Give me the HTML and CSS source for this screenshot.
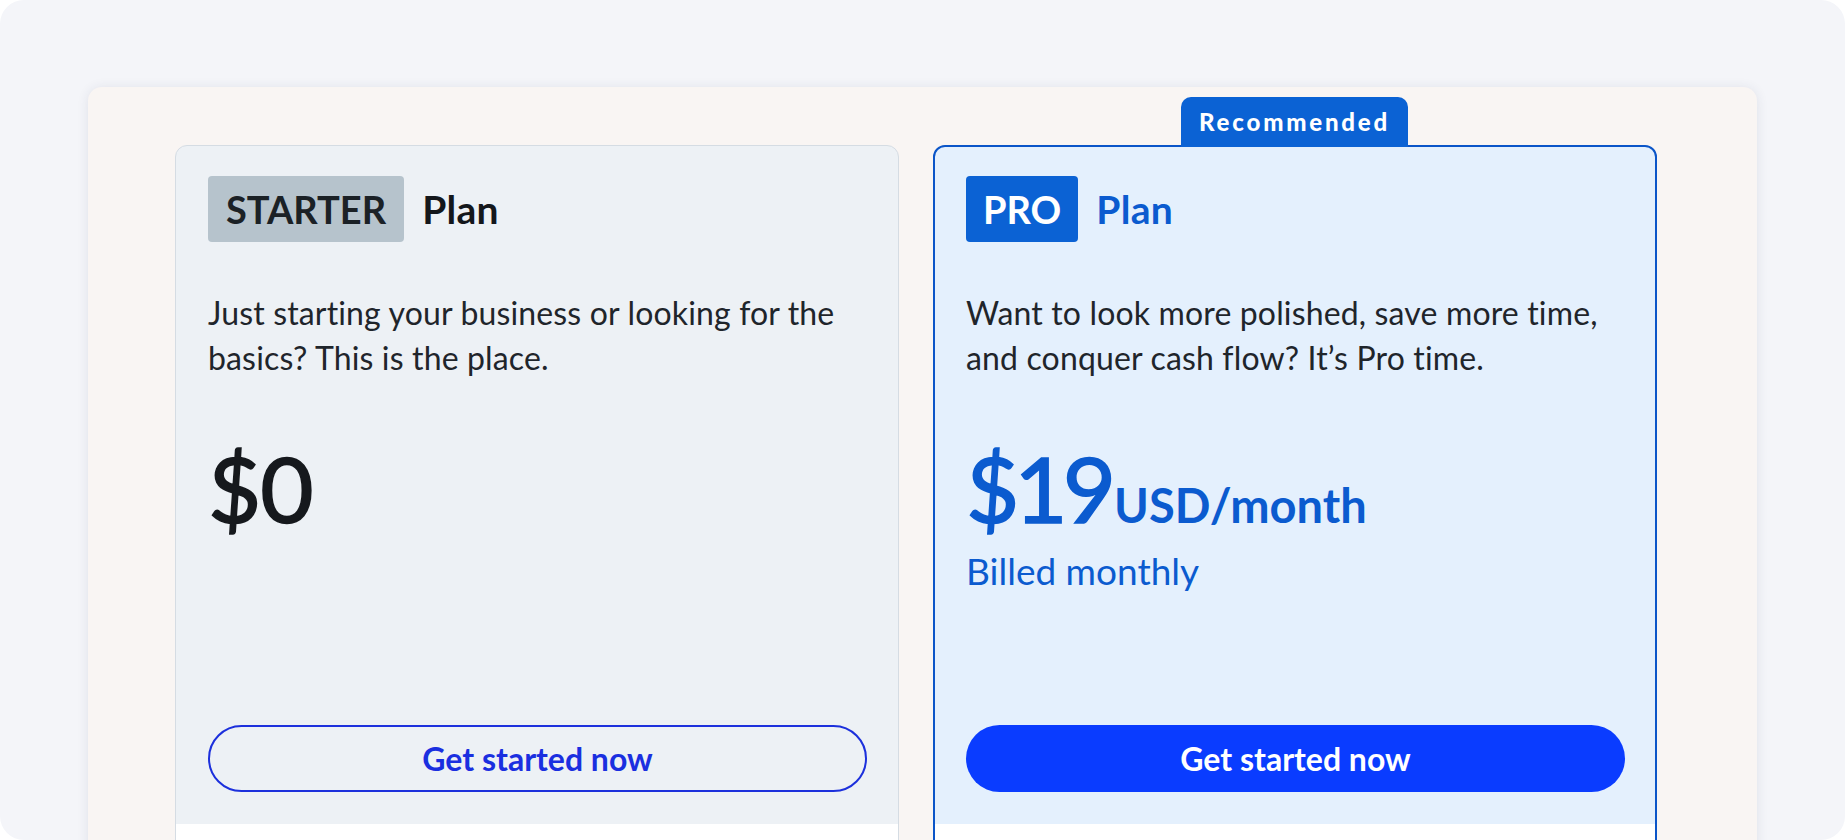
FILE: index.html
```html
<!DOCTYPE html>
<html lang="en">
<head>
<meta charset="utf-8">
<title>Plans</title>
<link rel="stylesheet" href="styles.css">
</head>
<body>
<div class="frame">
  <div class="panel">
    <div class="cards">
      <div class="card card-starter">
        <div class="card-top">
          <div class="title">
            <span class="badge badge-starter">STARTER</span>
            <span class="plan">Plan</span>
          </div>
          <p class="desc">Just starting your business or looking for the basics? This is the place.</p>
          <div class="price"><span class="amount">$0</span></div>
          <a class="btn btn-outline">Get started now</a>
        </div>
        <div class="card-features"></div>
      </div>
      <div class="card card-pro">
        <div class="tab">Recommended</div>
        <div class="card-top">
          <div class="title">
            <span class="badge badge-pro">PRO</span>
            <span class="plan plan-pro">Plan</span>
          </div>
          <p class="desc">Want to look more polished, save more time, and conquer cash flow? It’s Pro time.</p>
          <div class="price price-pro"><span class="amount">$19</span><span class="per">USD/month</span></div>
          <div class="billed">Billed monthly</div>
          <a class="btn btn-solid">Get started now</a>
        </div>
        <div class="card-features"></div>
      </div>
    </div>
  </div>
</div>
</body>
</html>
```

FILE: styles.css
```css
* { box-sizing: border-box; }
html, body { margin: 0; padding: 0; background: #ffffff; }
body { font-family: "Lato", "Open Sans", sans-serif; color: #1d2329; }

.frame {
  width: 1845px;
  height: 840px;
  background: #f4f5f9;
  border-radius: 24px;
  overflow: hidden;
  padding: 87px 0 0 88px;
}

.panel {
  width: 1669px;
  height: 900px;
  background: #f9f5f3;
  border-radius: 14px;
  box-shadow: 0 1px 12px rgba(40, 50, 90, 0.10);
  padding: 58px 0 0 87px;
}

.cards {
  display: flex;
  gap: 34px;
}

.card {
  position: relative;
  width: 724px;
  border-radius: 12px;
  border: 1px solid #d5dce3;
  background: #edf1f5;
  display: flex;
  flex-direction: column;
}

.card-pro {
  border: 2px solid #0b55c8;
  background: #e4f0fd;
}

.card-top {
  height: 678px;
  padding: 30px 32px 32px 32px;
  display: flex;
  flex-direction: column;
  align-items: flex-start;
}
.card-pro .card-top {
  height: 677px;
  padding: 29px 31px 32px 31px;
}

.card-features {
  height: 200px;
  background: #ffffff;
  border-radius: 0 0 11px 11px;
}

.tab {
  position: absolute;
  top: -50px;
  left: 246px;
  width: 227px;
  height: 50px;
  background: #0b62d4;
  border-radius: 10px 10px 0 0;
  color: #ffffff;
  font-weight: 900;
  font-size: 24px;
  letter-spacing: 2.8px;
  display: flex;
  align-items: center;
  justify-content: center;
  padding-bottom: 2px;
}

.title {
  display: flex;
  align-items: center;
  gap: 18px;
}

.badge {
  height: 66px;
  display: inline-flex;
  align-items: center;
  padding: 0 18px;
  border-radius: 4px;
  font-size: 38px;
  font-weight: 700;
}
.badge-starter { background: #b6c3cc; color: #1b2126; }
.badge-pro { background: #0b62d4; color: #ffffff; padding: 0 17px; }

.plan {
  font-size: 39px;
  font-weight: 700;
  color: #14171b;
  letter-spacing: 0.3px;
}
.plan-pro { color: #0b5bcf; }

.desc {
  margin: 48px 0 0 0;
  font-size: 32px;
  line-height: 45px;
  letter-spacing: 0.15px;
  color: #1f252b;
  max-width: 650px;
}

.price {
  margin-top: 62px;
  display: flex;
  align-items: baseline;
  gap: 3px;
  line-height: 1;
}
.amount {
  font-size: 92px;
  font-weight: 400;
  color: #16191d;
  letter-spacing: -1px;
  -webkit-text-stroke: 1.6px currentColor;
}
.price-pro .amount { color: #0b5bcf; letter-spacing: -5px; }
.per {
  font-size: 47px;
  font-weight: 700;
  color: #0b5bcf;
}

.billed {
  margin-top: 17px;
  font-size: 37px;
  line-height: 40px;
  color: #0b5bcf;
}

.btn {
  margin-top: auto;
  width: 659px;
  height: 67px;
  border-radius: 34px;
  display: flex;
  align-items: center;
  justify-content: center;
  font-size: 32px;
  font-weight: 700;
  text-decoration: none;
}
.btn-outline {
  border: 2px solid #1c30dc;
  color: #1a2fe0;
  background: transparent;
}
.btn-solid {
  background: #0a3cff;
  color: #ffffff;
}
```
